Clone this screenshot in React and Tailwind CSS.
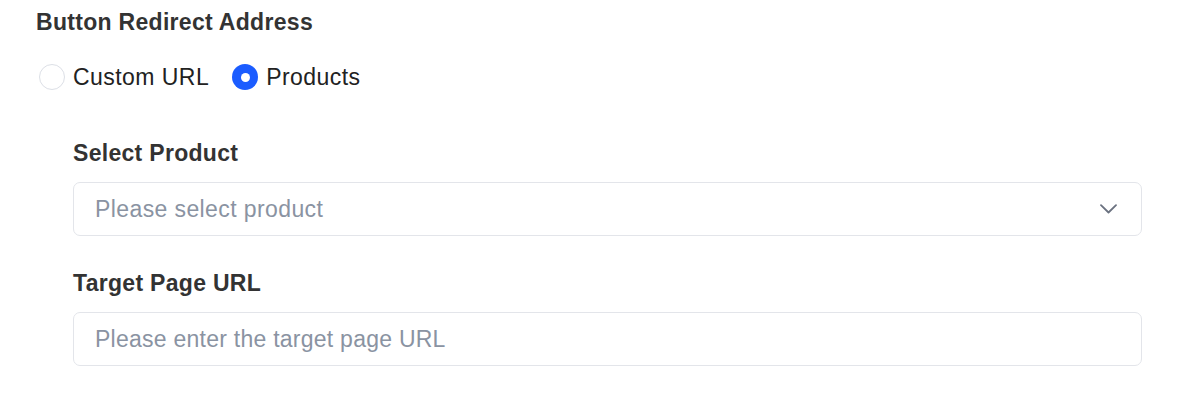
import { useState } from 'react';

function Radio({ checked, label, onClick }) {
  return (
    <label className="flex items-center gap-[8px] cursor-pointer" onClick={onClick}>
      <span
        className={`flex items-center justify-center w-[26px] h-[26px] rounded-full ${
          checked ? 'bg-[#1b5cff]' : 'border border-[#dcdfe6] bg-white'
        }`}
      >
        {checked && <span className="w-[9px] h-[9px] rounded-full bg-white" />}
      </span>
      <span className="text-[23px] leading-[32px] tracking-[0.45px] text-[#222]">{label}</span>
    </label>
  );
}

export default function App() {
  const [mode, setMode] = useState('products');

  return (
    <div className="w-[1200px] h-[403px] bg-white pl-[36px] pt-[6px]" style={{ fontFamily: '"Liberation Sans", Arial, sans-serif' }}>
      <div className="text-[23px] leading-[32px] font-bold tracking-[0.3px] text-[#333]">Button Redirect Address</div>

      <div className="flex items-center gap-[23px] mt-[23px] pl-[3px]">
        <Radio checked={mode === 'custom'} label="Custom URL" onClick={() => setMode('custom')} />
        <Radio checked={mode === 'products'} label="Products" onClick={() => setMode('products')} />
      </div>

      {/* Products form */}
      <div className="pl-[37px] w-[1106px] mt-[44px]">
        <div className="text-[23px] leading-[32px] font-bold tracking-[0.3px] text-[#333]">Select Product</div>
        <div className="mt-[13px] h-[54px] flex items-center justify-between border border-[#e3e5ea] rounded-[7px] pl-[21px] pr-[24px]">
          <span className="text-[23px] tracking-[0.4px] text-[#8a93a2]">Please select product</span>
          <svg width="17" height="10" viewBox="0 0 17 10" fill="none">
            <path d="M1 1.2L8.5 8.5L16 1.2" stroke="#6b7280" strokeWidth="1.8" strokeLinecap="round" strokeLinejoin="round" />
          </svg>
        </div>

        <div className="mt-[31px] text-[23px] leading-[32px] font-bold tracking-[0.3px] text-[#333]">Target Page URL</div>
        <input
          className="mt-[13px] w-full h-[54px] border border-[#e3e5ea] rounded-[7px] px-[21px] text-[23px] tracking-[0.25px] text-[#222] placeholder:text-[#8a93a2] outline-none"
          placeholder="Please enter the target page URL"
        />
      </div>
    </div>
  );
}
